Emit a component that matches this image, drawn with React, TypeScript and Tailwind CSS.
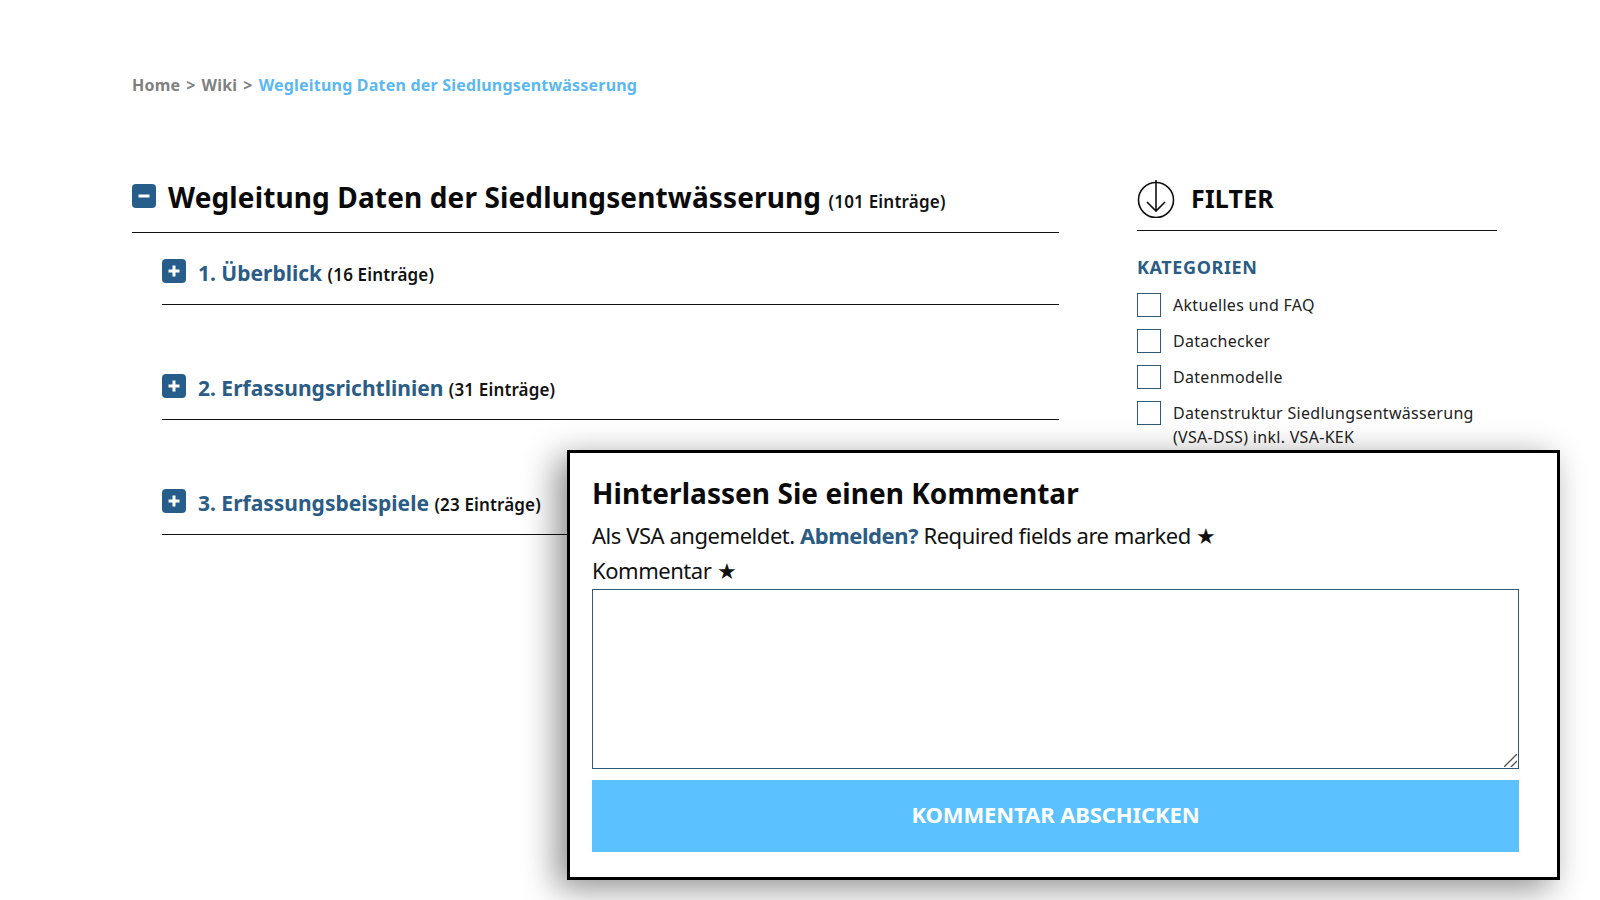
import React from "react";

const font = { fontFamily: '"Noto Sans", sans-serif' };

function Toggle({ minus = false }: { minus?: boolean }) {
  return (
    <span className="flex h-6 w-6 shrink-0 items-center justify-center rounded-[4px] bg-[#275d8b]">
      <svg width="14" height="14" viewBox="0 0 14 14">
        <rect x="1.5" y="5.5" width="11" height="3" fill="#fff" />
        {!minus && <rect x="5.5" y="1.5" width="3" height="11" fill="#fff" />}
      </svg>
    </span>
  );
}

function Section({ title, count, first = false }: { title: string; count: string; first?: boolean }) {
  return (
    <div className={first ? "ml-[30px] flex h-[72px] items-end border-b border-[#111] pb-[15px]" : "ml-[30px] flex h-[115px] items-end border-b border-[#111] pb-[15px]"}>
      <div className="flex items-start gap-3">
        <Toggle />
        <h3 className="text-[21px] leading-7 font-bold text-[#2a5c85]">
          {title} <span className="text-[17px] font-semibold tracking-[0.15px] text-[#111]">{count}</span>
        </h3>
      </div>
    </div>
  );
}

function Check({ label }: { label: React.ReactNode }) {
  return (
    <label className="flex gap-3 text-[16px] leading-6 tracking-[0.3px] text-[#222]">
      <span className="h-6 w-6 shrink-0 border border-[#2f5a78] bg-white" />
      <span>{label}</span>
    </label>
  );
}

export default function App() {
  return (
    <div style={font} className="relative h-[900px] w-[1600px] overflow-hidden bg-white">
      <div className="pt-[73px] pr-[103px] pl-[132px]">
        <nav className="flex gap-[6px] text-[16px] leading-6 font-bold tracking-[0.2px] text-[#808080]">
          <span>Home</span>
          <span>&gt;</span>
          <span>Wiki</span>
          <span>&gt;</span>
          <span className="text-[#5cb8f0]">Wegleitung Daten der Siedlungsentwässerung</span>
        </nav>
        <div className="mt-[86px] flex justify-between">
          <main className="w-[927px]">
            <div className="flex h-[50px] items-start gap-3 border-b border-[#111]">
              <span className="mt-[1px]">
                <Toggle minus />
              </span>
              <h2 className="-mt-[3px] text-[28px] leading-[34px] font-bold tracking-[0.13px] text-[#0a0a0a]">
                Wegleitung Daten der Siedlungsentwässerung{" "}
                <span className="text-[17px] font-semibold tracking-[0.2px] text-[#111]">(101 Einträge)</span>
              </h2>
            </div>
            <Section first title="1. Überblick" count="(16 Einträge)" />
            <Section title="2. Erfassungsrichtlinien" count="(31 Einträge)" />
            <Section title="3. Erfassungsbeispiele" count="(23 Einträge)" />
          </main>
          <aside className="w-[360px]">
            <div className="flex h-[48px] items-start gap-[16px] border-b border-[#111]">
              <svg className="-mt-[3px]" width="38" height="38" viewBox="0 0 38 38" fill="none" stroke="#111" strokeWidth="1.6">
                <circle cx="19" cy="20" r="17.5" />
                <path d="M19 0v31M10 22l9 9 9-9" />
              </svg>
              <h2 className="-mt-[1px] text-[25px] leading-8 font-bold tracking-[0.2px] text-[#0a0a0a]">FILTER</h2>
            </div>
            <h4 className="mt-[24px] text-[18px] leading-6 font-bold tracking-[0.6px] text-[#2a5c85]">KATEGORIEN</h4>
            <div className="mt-[14px] flex flex-col gap-3">
              <Check label="Aktuelles und FAQ" />
              <Check label="Datachecker" />
              <Check label="Datenmodelle" />
              <Check label={<>Datenstruktur Siedlungsentwässerung<br />(VSA-DSS) inkl. VSA-KEK</>} />
            </div>
          </aside>
        </div>
      </div>

      <section className="absolute top-[450px] left-[567px] h-[430px] w-[993px] border-[3px] border-black bg-white px-[22px] pt-[22px] shadow-[-10px_8px_32px_rgba(0,0,0,0.45)]">
        <h2 className="text-[28px] leading-9 font-bold tracking-[0.05px] text-[#0a0a0a]">Hinterlassen Sie einen Kommentar</h2>
        <p className="mt-[8px] text-[22px] leading-8 tracking-[-0.45px] text-[#111]">
          Als VSA angemeldet. <a className="font-bold text-[#2a5c85]">Abmelden?</a> Required fields are marked ★
        </p>
        <label className="mt-[3px] block text-[22px] leading-8 tracking-[-0.45px] text-[#111]">Kommentar ★</label>
        <div className="relative mt-[3px] h-[180px] w-[927px]">
          <textarea className="block h-full w-full resize-none border border-[#2f5a78] bg-white outline-none" />
          <svg className="absolute right-[2px] bottom-[2px]" width="13" height="13" viewBox="0 0 13 13" stroke="#555" strokeWidth="1.4">
            <path d="M0 13L13 0M7 13l6-6" />
          </svg>
        </div>
        <button className="mt-[11px] block h-[72px] w-[927px] bg-[#5bc2ff] pb-[3px] text-[22px] font-bold tracking-[-0.1px] text-white">
          KOMMENTAR ABSCHICKEN
        </button>
      </section>
    </div>
  );
}
